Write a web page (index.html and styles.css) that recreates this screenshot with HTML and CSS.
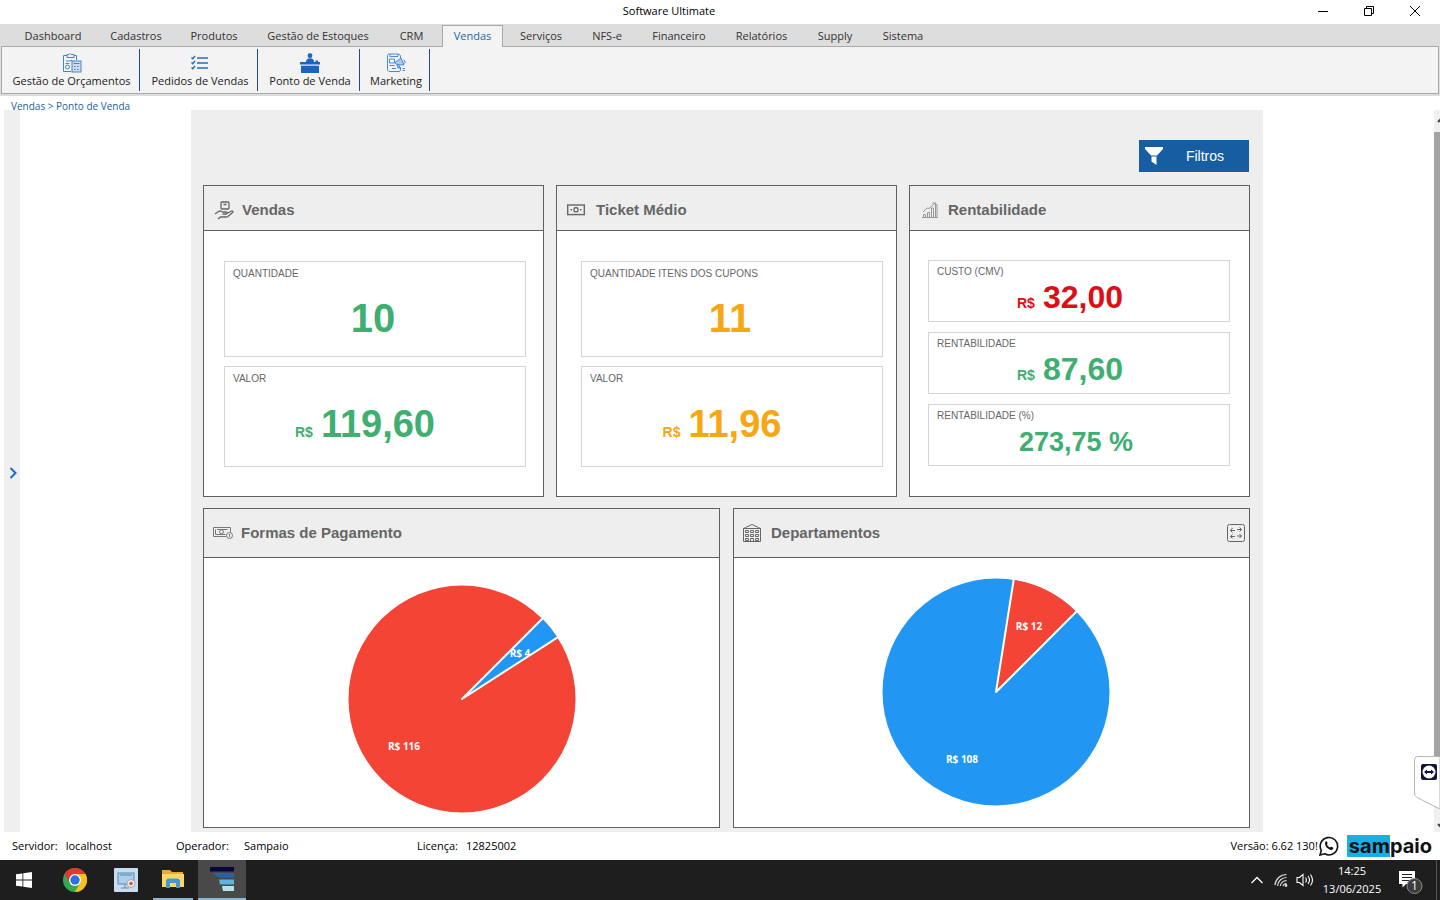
FILE: index.html
```html
<!DOCTYPE html>
<html lang="pt-BR">
<head>
<meta charset="utf-8">
<title>Software Ultimate</title>
<link rel="stylesheet" href="styles.css">
</head>
<body>
<header class="titlebar">
  <h1 class="titlebar-name">Software Ultimate</h1>
  <button class="win-btn" aria-label="Minimizar"><svg width="12" height="12" viewBox="0 0 12 12"><path d="M1 6.500h10"/></svg></button>
  <button class="win-btn" aria-label="Restaurar"><svg width="12" height="12" viewBox="0 0 12 12"><path d="M1.500 3.500h7v7h-7zM3.500 3.500v-2h7v7h-2"/></svg></button>
  <button class="win-btn" aria-label="Fechar"><svg width="12" height="12" viewBox="0 0 12 12"><path d="M1 1l10 10M11 1L1 11"/></svg></button>
</header>

<nav class="menu">
  <button class="menu-tab">Dashboard</button>
  <button class="menu-tab">Cadastros</button>
  <button class="menu-tab">Produtos</button>
  <button class="menu-tab">Gestão de Estoques</button>
  <button class="menu-tab">CRM</button>
  <button class="menu-tab active">Vendas</button>
  <button class="menu-tab">Serviços</button>
  <button class="menu-tab">NFS-e</button>
  <button class="menu-tab">Financeiro</button>
  <button class="menu-tab">Relatórios</button>
  <button class="menu-tab">Supply</button>
  <button class="menu-tab">Sistema</button>
</nav>

<div class="ribbon-wrap">
  <div class="ribbon">
    <button class="ribbon-btn">
      <svg width="20" height="20" viewBox="0 0 20 20" fill="none" stroke="#4a82c8"><path d="M9 18.500H1.500v-16H5M12 2.500h2.500V7"/><path d="M5 1.500h2l1-1 1 1h3v3H5z"/><path d="M4 8h4l2-1M3.500 10.500h4"/><circle cx="5.500" cy="14" r="2"/><rect x="10" y="8" width="9" height="11" fill="#c9dcf3"/><path d="M11.500 10.500h6M12 13.500h1.500M15 13.500h1.500M12 16.500h1.500M15 16.500h1.500"/></svg>
      <span>Gestão de Orçamentos</span>
    </button>
    <button class="ribbon-btn">
      <svg width="20" height="20" viewBox="0 0 20 20" fill="none" stroke="#2d6cb8" stroke-width="1.500"><path d="M7 5h11M7 10h11M7 15h11" stroke-width="1.700"/><path d="M1.500 4.500l1.200 1.200L5 3M1.500 9.500l1.200 1.200L5 8M1.500 14.500l1.200 1.200L5 13"/></svg>
      <span>Pedidos de Vendas</span>
    </button>
    <button class="ribbon-btn">
      <svg width="20" height="20" viewBox="0 0 20 20" fill="#1b64c4"><circle cx="10" cy="2.700" r="2.400"/><path d="M6 9c0-2.500 1.500-3.800 4-3.800S14 6.500 14 9z"/><path d="M0 9h15.500V7.500h2.500V9h2v2.500H0z"/><path d="M1 12.700h18V20H1z"/></svg>
      <span>Ponto de Venda</span>
    </button>
    <button class="ribbon-btn">
      <svg width="20" height="20" viewBox="0 0 20 20" fill="none" stroke="#4a8ad2"><path d="M14.500 5V2.500l-2-1.500h-10L1.500 2.500V17l1.500 1.500h10.500l1-1.500v-3"/><path d="M4 1v2.500h8V1M3.500 6h5v4h-5zM3.500 12.500h5M6 15.500h4"/><path d="M9 9.500l6-4.500 3 7-7.500-.5zM11 12l1 3h2l-1-3M17.500 7c2 .5 2 2.500 1 3.500" fill="#a9cbee"/><path d="M16.500 15.500h2.500M16.500 17.500h2.500" /></svg>
      <span>Marketing</span>
    </button>
  </div>
</div>

<nav class="breadcrumb" aria-label="Navegação"><a href="#vendas">Vendas</a> &gt; <a href="#pdv">Ponto de Venda</a></nav>

<main class="workspace">
  <button class="side-toggle" aria-label="Expandir painel"><svg width="9" height="12" viewBox="0 0 9 12"><path d="M1.500 1l5 5-5 5" fill="none" stroke="#1c6fc4" stroke-width="2"/></svg></button>

  <div class="stage">
    <div class="dashboard">
      <div class="toolbar">
        <button class="filter-btn">
          <svg width="18" height="20" viewBox="0 0 18 20"><path d="M0 1h18v2l-6 6.500H6L0 3z" fill="#fff"/><path d="M6.500 10.500h5V19l-5-3.500z" fill="#fff"/></svg>
          <span>Filtros</span>
        </button>
      </div>

      <div class="row row-three">
        <section class="card">
          <h2 class="card-head">
            <svg width="20" height="20" viewBox="0 0 20 20" fill="none" stroke="#666" stroke-width="1.300"><rect x="7" y="2" width="8" height="7" rx="1"/><path d="M9.500 4.500h3M1 14l3.500-2.500c1-.7 2-.7 3 0l1.500.5h3c1.500 0 1.500 2 0 2H8.500M13 13.500l4.500-2.500c1.200-.5 2 .7 1 1.500L14 16.500c-.8.600-1.500.500-2.500.500H6.500L4 19"/></svg>
            Vendas
          </h2>
          <div class="metrics metrics-vendas">
            <div class="metric tall green"><span class="metric-label">QUANTIDADE</span><div class="metric-value count">10</div></div>
            <div class="metric taller green"><span class="metric-label">VALOR</span><div class="metric-value money"><small>R$</small>119,60</div></div>
          </div>
        </section>

        <section class="card">
          <h2 class="card-head ticket">
            <svg width="18" height="12" viewBox="0 0 18 12" fill="none" stroke="#666" stroke-width="1.400"><rect x=".7" y="1" width="16.600" height="9.600"/><rect x="7" y="3.700" width="4" height="4.200" rx="1.500"/><path d="M3.500 5.800h1.500M13 5.800h1.500"/></svg>
            Ticket Médio
          </h2>
          <div class="metrics metrics-ticket">
            <div class="metric tall orange"><span class="metric-label">QUANTIDADE ITENS DOS CUPONS</span><div class="metric-value count">11</div></div>
            <div class="metric taller orange"><span class="metric-label">VALOR</span><div class="metric-value money"><small>R$</small>11,96</div></div>
          </div>
        </section>

        <section class="card">
          <h2 class="card-head wide">
            <svg width="18" height="18" viewBox="0 0 18 18" fill="none" stroke="#999"><path d="M3.500 16.500v-3h2v3M7.500 16.500v-5h2v5M11.500 16.500V7h2v9.500M15.500 16.500v-13h1.500v13M2 16.500h16M3 11l4-4 2 .5 6-5.500M12.500 2h3v2"/></svg>
            Rentabilidade
          </h2>
          <div class="metrics metrics-rent">
            <div class="metric red"><span class="metric-label">CUSTO (CMV)</span><div class="metric-value compact"><small>R$</small>32,00</div></div>
            <div class="metric green"><span class="metric-label">RENTABILIDADE</span><div class="metric-value compact"><small>R$</small>87,60</div></div>
            <div class="metric green"><span class="metric-label">RENTABILIDADE (%)</span><div class="metric-value percent">273,75 %</div></div>
          </div>
        </section>
      </div>

      <div class="row row-two">
        <section class="card">
          <h2 class="card-head large">
            <svg width="20" height="14" viewBox="0 0 20 14" fill="none" stroke="#777"><path d="M13 10.500H.5v-9h17V6"/><path d="M2.500 3.500v5h10M4 3.500h10.500"/><circle cx="8.500" cy="5.800" r="2"/><circle cx="16.500" cy="9.500" r="3"/><path d="M16.500 8v3"/></svg>
            Formas de Pagamento
          </h2>
          <div class="chart chart-payments">
            <svg width="228" height="228" viewBox="-114 -114 228 228" role="img" aria-label="Formas de pagamento">
              <circle r="113.500" fill="#f34436"/>
              <path d="M0 0L80.300 -80.300A113.500 113.500 0 0 1 95.400 -61.500Z" fill="#2196f3"/>
              <path d="M80.700 -80.700L0 0L96 -61.900" class="slice-line"/>
              <text x="-58" y="51">R$ 116</text>
              <text x="58" y="-42">R$ 4</text>
            </svg>
          </div>
        </section>

        <section class="card">
          <h2 class="card-head large wide">
            <svg width="18" height="20" viewBox="0 0 18 20" fill="none" stroke="#666"><path d="M.5 18.500V5.500l2-1L9 1.500l6.500 3 2 1v13zM.5 5.500h17"/><path d="M2.500 7.500h3v2h-3zM7.500 7.500h3v2h-3zM12.500 7.500h3v2h-3zM2.500 11.500h3v2h-3zM7.500 11.500h3v2h-3zM12.500 11.500h3v2h-3zM2.500 15.500h3v2h-3zM12.500 15.500h3v2h-3zM7.500 18.500v-3h3v3"/></svg>
            Departamentos
            <button class="expand-btn" aria-label="Expandir"><svg width="18" height="18" viewBox="0 0 18 18" fill="none" stroke="#666"><rect x=".5" y=".5" width="17" height="17" rx="2"/><path d="M8 6.500H3.500M5.500 4L3.500 6.500l2 2M10 5.500h4.500M12.500 3.500l2 2-2 2M8 12.500H3.500M5.500 10.500l-2 2 2 2M10 12h4.500M12.500 10l2 2-2 2"/></svg></button>
          </h2>
          <div class="chart chart-departments">
            <svg width="228" height="228" viewBox="-114 -114 228 228" role="img" aria-label="Departamentos">
              <circle r="113.500" fill="#2196f3"/>
              <path d="M0 0L17.700 -112.100A113.500 113.500 0 0 1 80.300 -80.300Z" fill="#f34436"/>
              <path d="M17.800 -113L0 0L81 -81" class="slice-line"/>
              <text x="-34" y="71">R$ 108</text>
              <text x="33" y="-62">R$ 12</text>
            </svg>
          </div>
        </section>
      </div>
    </div>
  </div>

  <div class="scrollbar" aria-hidden="true">
    <svg class="scroll-arrow" width="6" height="22" viewBox="0 0 6 22"><path d="M4 12l3-3" stroke="#444" stroke-width="2"/></svg>
    <div class="scroll-thumb"></div>
    <svg class="scroll-arrow" width="6" height="22" viewBox="0 0 6 22"><path d="M4 14l3 3" stroke="#444" stroke-width="2"/></svg>
  </div>

  <button class="remote-tab" aria-label="Acesso remoto">
    <svg width="26" height="53" viewBox="0 0 26 53"><path d="M27 .5H3.500Q.5.500.5 4v33q0 3 2.500 4.500L26 53V.5" fill="#fff" stroke="#b5b5b5"/><rect x="7" y="8" width="16" height="16" rx="2" fill="#12123a"/><circle cx="15" cy="16" r="6.500" fill="#fff"/><path d="M10 16l3-2.500v1.600h4v-1.600l3 2.500-3 2.500v-1.600h-4v1.600z" fill="#12123a"/></svg>
  </button>
</main>

<footer class="status">
  <dl class="status-list">
    <div class="status-item server"><dt>Servidor:</dt><dd>localhost</dd></div>
    <div class="status-item operator"><dt>Operador:</dt><dd>Sampaio</dd></div>
    <div class="status-item license"><dt>Licença:</dt><dd>12825002</dd></div>
  </dl>
  <span class="version">Versão: 6.62 130!</span>
  <button class="whats-btn" aria-label="WhatsApp"><svg width="20" height="20" viewBox="0 0 20 20"><path d="M1 19l1.300-4.600A8.700 8.700 0 1 1 5.700 17.800z" fill="#fff" stroke="#111" stroke-width="1.600"/><path d="M6.500 5.500c.6-.6 1.300-.4 1.500.2l.6 1.500c.1.400-.7 1-.6 1.400.6 1.300 1.700 2.300 3 2.900.4.100 1-.9 1.400-.7l1.600.8c.5.300.3 1.200-.2 1.700-2.600 2.400-9.600-3.200-7.300-7.800z" fill="#111"/></svg></button>
  <div class="brand"><span class="brand-box">sam</span>paio</div>
</footer>

<div class="taskbar">
  <button class="task" aria-label="Iniciar"><svg width="16" height="16" viewBox="0 0 16 16" fill="#fff"><path d="M0 2.300L6.500 1.400V7.600H0zM7.300 1.300L16 0v7.600H7.300zM0 8.400h6.500v6.200L0 13.700zM7.300 8.400H16V16l-8.700-1.300z"/></svg></button>
  <button class="task chrome" aria-label="Chrome"><svg width="24" height="24" viewBox="0 0 24 24"><circle cx="12" cy="12" r="12" fill="#34a853"/><path d="M1.600 6A12 12 0 0 1 22.400 6H12l-5.200 9z" fill="#dd3b30"/><path d="M22.400 6A12 12 0 0 1 12 24l5.200-9L12 6z" fill="#fbc116"/><circle cx="12" cy="12" r="6" fill="#fff"/><circle cx="12" cy="12" r="4.700" fill="#2f6fe0"/></svg></button>
  <button class="task" aria-label="Captura"><svg width="24" height="24" viewBox="0 0 24 24"><rect width="24" height="24" rx="1" fill="#c8def0"/><rect x="4" y="5" width="16" height="11" fill="#a8d0ec" stroke="#5f88aa"/><path d="M7 20h8M11 16v4M6 7h12" stroke="#5f88aa" fill="none"/><circle cx="17" cy="15.500" r="4" fill="#f2e8e8" stroke="#a9a9b5"/><circle cx="17" cy="15.500" r="1.700" fill="#d0502e"/></svg></button>
  <button class="task open" aria-label="Explorador"><svg width="22" height="20" viewBox="0 0 22 20"><path d="M0 1h8l2 2h11v15H0z" fill="#e2ac37"/><path d="M0 5h22v13H0z" fill="#fcd767"/><path d="M4 19v-8l2-1.500h10l2 1.500v8h-4v-5H8v5z" fill="#4698cf"/></svg></button>
  <button class="task active" aria-label="Software Ultimate"><svg width="26" height="26" viewBox="0 0 26 26"><path d="M1 1h24v4.500H1z" fill="#05063e"/><path d="M3 7h22v4.500H10z" fill="#2862a0"/><path d="M10 13.500h15v5H11z" fill="#5eb2e2"/><path d="M13 20h12v5H14z" fill="#b4e3ee"/></svg></button>
  <div class="tray">
    <button class="tray-btn" aria-label="Ícones ocultos"><svg width="14" height="10" viewBox="0 0 14 10"><path d="M1.500 8L7 2.500 12.500 8" fill="none" stroke="#fff" stroke-width="1.300"/></svg></button>
    <button class="tray-btn" aria-label="Rede"><svg width="14" height="14" viewBox="0 0 14 14" fill="none" stroke="#ddd" stroke-width="1.200"><path d="M1 12A11.500 11.500 0 0 1 12.500 1.500M3.500 13A9 9 0 0 1 12.500 4.500M6.300 13A6 6 0 0 1 12.500 7.700M9 13a3.500 3.500 0 0 1 3.500-2.500"/><circle cx="12" cy="12.500" r=".8" fill="#fff"/></svg></button>
    <button class="tray-btn" aria-label="Volume"><svg width="18" height="14" viewBox="0 0 18 14" fill="none" stroke="#fff" stroke-width="1.100"><path d="M1 4.500h2.500L7 1.500v11l-3.500-3H1zM9.500 4.500q1.800 2.500 0 5M12 3q3 4 0 8M14.500 1.500q4 5.500 0 11"/></svg></button>
    <div class="clock"><time>14:25</time><time>13/06/2025</time></div>
    <button class="notice" aria-label="Notificações"><svg width="26" height="26" viewBox="0 0 26 26"><path d="M1 2h16v13H8l-3.500 3.500V15H1z" fill="#fff"/><path d="M4 5.500h10M4 8.500h10M4 11.500h7" stroke="#222"/><circle cx="16.500" cy="17" r="7.500" fill="#3c3c3c" stroke="#8c8c8c"/></svg><span class="notice-count">1</span></button>
    <div class="show-desktop"></div>
  </div>
</div>
</body>
</html>
```

FILE: styles.css
```css
* { box-sizing: border-box; }

body {
  margin: 0;
  min-height: 100vh;
  display: flex;
  flex-direction: column;
  background: #fff;
  color: #111;
  font: 11px/16px "Open Sans", "Noto Sans", sans-serif;
}

button {
  margin: 0;
  padding: 0;
  border: 0;
  background: none;
  color: inherit;
  font: inherit;
}

h1, h2, dl, dd { margin: 0; }
svg { display: block; flex: none; }

/* Title bar */
.titlebar { display: flex; align-items: flex-start; height: 24px; padding-right: 2px; }
.titlebar-name { flex: 1; padding-left: 38px; text-align: center; font-size: 11px; line-height: 22px; font-weight: 400; color: #000; }
.win-btn { width: 46px; height: 22px; display: flex; align-items: center; justify-content: center; }
.win-btn svg { fill: none; stroke: #000; }

/* Menu */
.menu {
  display: grid;
  grid-template-columns: 86px 80px 76px 132px 55px 66px 72px 60px 84px 81px 66px 70px;
  height: 22px;
  padding-left: 10px;
  background: #ddd;
}
.menu-tab { padding-top: 2px; color: #333; white-space: nowrap; text-align: center; }
.menu-tab.active {
  position: relative;
  z-index: 1;
  margin: 1px 2px -1px 3px;
  padding: 0 0 1px;
  background: #f3f3f3;
  border: 1px solid #a9a9a9;
  border-bottom: 0;
  color: #1a69ac;
}

/* Ribbon */
.ribbon-wrap { padding: 0 1px 2px; background: #ddd; }
.ribbon { display: flex; height: 48px; padding: 2px; background: #f3f3f3; border: 1px solid #a9a9a9; }
.ribbon-btn {
  display: flex;
  flex-direction: column;
  align-items: center;
  padding: 4px 0 0;
  border-right: 1px solid #1f4e86;
  color: #222;
  white-space: nowrap;
}
.ribbon-btn:nth-child(1) { width: 136px; }
.ribbon-btn:nth-child(2) { width: 118px; padding-left: 3px; }
.ribbon-btn:nth-child(3) { width: 102px; padding-left: 3px; }
.ribbon-btn:nth-child(4) { width: 70px; padding-left: 3px; }

.breadcrumb { height: 14px; padding: 2px 0 0 11px; font-size: 10px; line-height: 16px; color: #1c5f9c; }
.breadcrumb a { color: inherit; text-decoration: none; }

/* Workspace */
.workspace { position: relative; flex: 1; display: flex; padding-left: 4px; }
.side-toggle { width: 16px; background: #efefef; display: flex; align-items: center; justify-content: flex-end; padding-right: 2px; padding-top: 4px; }
.stage { flex: 1; display: flex; justify-content: center; }
.dashboard { flex: 0 1 1072px; padding: 30px 13px 4px 12px; background: #eee; }

.toolbar { display: flex; justify-content: flex-end; margin-bottom: 13px; padding-right: 1px; }
.filter-btn {
  display: flex;
  align-items: center;
  width: 110px;
  height: 32px;
  padding: 0 6px;
  background: #165da1;
  color: #fff;
  font: 14px/20px "Liberation Sans", Arial, sans-serif;
}
.filter-btn span { flex: 1; padding-left: 4px; text-align: center; }

.row { display: grid; }
.row-three { grid-template-columns: repeat(3, 1fr); gap: 12px; margin-bottom: 11px; }
.row-two { grid-template-columns: repeat(2, 1fr); gap: 13px; }

.card { display: flex; flex-direction: column; background: #fff; border: 1px solid #5f5f5f; font-family: "Liberation Sans", Arial, sans-serif; }
.card-head {
  display: flex;
  align-items: center;
  gap: 8px;
  height: 45px;
  padding: 3px 4px 0 10px;
  background: #eee;
  border-bottom: 1px solid #5f5f5f;
  color: #666;
  font-size: 15px;
  line-height: 20px;
  font-weight: 700;
}
.card-head.ticket { gap: 11px; }
.card-head.wide { gap: 10px; }
.card-head.large { height: 49px; padding-top: 0; padding-left: 9px; }
.expand-btn { margin-left: auto; }

/* Metrics */
.metrics { display: flex; flex-direction: column; gap: 9px; }
.metrics-vendas { padding: 30px 17px 29px 20px; }
.metrics-ticket { padding: 30px 13px 29px 24px; }
.metrics-rent { gap: 10px; padding: 29px 19px 29px 18px; }

.metric { display: flex; flex-direction: column; min-height: 62px; padding: 3px 8px; border: 1px solid #d4d4d4; }
.metric.tall { min-height: 96px; padding-top: 4px; }
.metric.taller { min-height: 101px; padding-top: 4px; }
.metric-label { color: #666; font-size: 10px; line-height: 16px; }
.metric-value { text-align: center; font-weight: 700; }
.metric-value small { margin-right: 8px; font-size: 14px; line-height: 14px; }
.count { padding: 14px 4px 0 0; font-size: 40px; line-height: 44px; }
.money { padding: 15px 20px 0 0; font-size: 38px; line-height: 44px; }
.compact { padding-right: 18px; font-size: 32px; line-height: 34px; }
.percent { padding-right: 6px; font-size: 27px; line-height: 36px; }

.green { color: #3eae71; }
.orange { color: #f7a614; }
.red { color: #dc0f14; }

/* Charts */
.chart { display: flex; justify-content: center; min-height: 269px; }
.chart-payments { padding-top: 27px; }
.chart-departments { padding: 20px 0 0 8px; }
.chart text { fill: #fff; font: 700 10px "Open Sans", sans-serif; text-anchor: middle; }
.slice-line { fill: none; stroke: #fff; stroke-width: 2; stroke-linejoin: round; }

/* Scrollbar and docked tab */
.scrollbar { display: flex; flex-direction: column; width: 6px; background: #f0f0f0; }
.scroll-thumb { flex: 1; margin-bottom: 30px; background: #a3a3a3; }
.remote-tab { position: absolute; right: 0; bottom: 23px; }

/* Status bar */
.status { display: flex; align-items: center; height: 28px; padding: 0 8px 0 12px; color: #000; }
.status-list { flex: 1; display: flex; }
.status-item { display: flex; }
.status-item dt { margin-right: 8px; }
.server { width: 164px; }
.operator { width: 241px; }
.operator dt { width: 60px; }
.version { margin-right: 1px; white-space: nowrap; }
.whats-btn { margin-right: 8px; }
.brand { font: 700 20px/22px Inter, sans-serif; color: #111; }
.brand-box { display: inline-block; padding-left: 2px; background: #19aee5; }

/* Taskbar */
.taskbar { display: flex; height: 40px; background: #1e1e1e; color: #fff; }
.task { width: 49px; display: flex; align-items: center; justify-content: center; }
.task:first-child { width: 48px; }
.task.chrome { width: 53px; }
.task.open { border-bottom: 2px solid #86b9dd; width: 40px; margin: 0 5px 0 3px; }
.task.active { width: 48px; background: #494949; border-bottom: 2px solid #86b9dd; }
.tray { flex: 1; display: flex; justify-content: flex-end; align-items: center; }
.tray-btn { width: 24px; display: flex; justify-content: center; }
.clock { width: 70px; display: flex; flex-direction: column; text-align: center; line-height: 18px; }
.notice { position: relative; margin: 4px 12px 0 11px; }
.notice-count { position: absolute; left: 13px; top: 9px; font-size: 12px; line-height: 16px; }
.show-desktop { width: 4px; height: 40px; border-left: 1px solid #555; }
```
